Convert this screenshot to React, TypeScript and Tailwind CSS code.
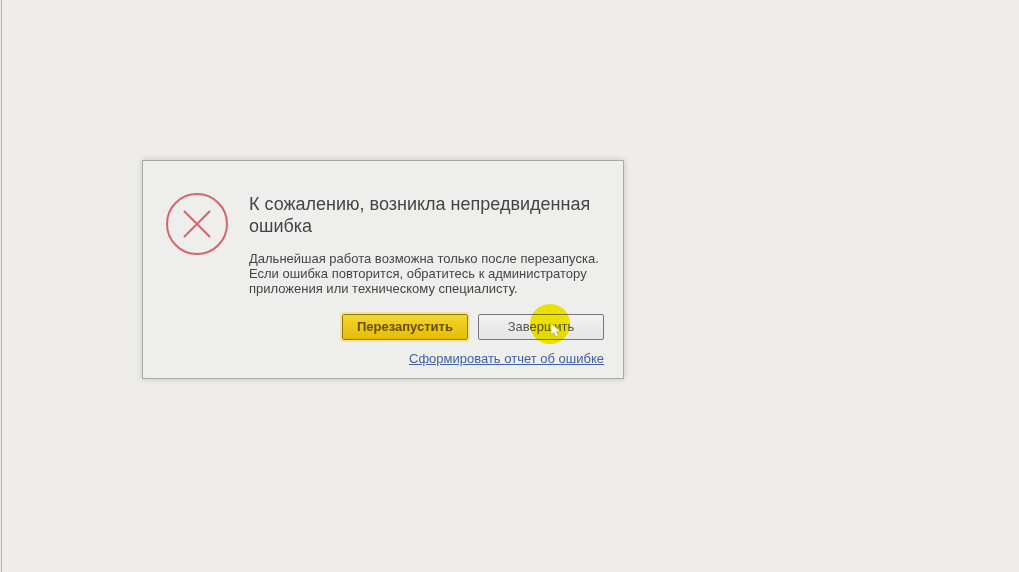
function ErrorIcon() {
  return (
    <svg className="size-16 shrink-0" viewBox="0 0 64 64" fill="none" stroke="#d9636a" strokeWidth="2" aria-hidden="true">
      <circle cx="32" cy="31" r="30" />
      <path d="M19.5 18.5 44.5 43.5M44.5 18.5 19.5 43.5" strokeLinecap="round" />
    </svg>
  );
}

function Pointer() {
  return (
    <span className="pointer-events-none absolute -top-2.5 left-13 size-10" aria-hidden="true">
      <span className="absolute inset-0 rounded-full bg-[#fcf000] mix-blend-multiply" />
      <svg className="absolute left-5 top-4.5 h-4 w-3" viewBox="0 0 12 16">
        <path
          d="M1 1v12l2.8-2.4 2 4.4 2.6-1.2-2-4.2H10.4z"
          fill="#fffbe8"
          stroke="#b5a83c"
          strokeWidth="0.6"
          strokeLinejoin="round"
        />
      </svg>
    </span>
  );
}

export default function App() {
  return (
    <main className="min-h-screen bg-[#eeedeb] pl-px font-['Liberation_Sans',Arial,sans-serif] text-[#454545]">
      <div className="min-h-screen border-l border-[#b3b2ac] px-35 py-40">
        <section
          role="alertdialog"
          aria-labelledby="error-title"
          aria-describedby="error-text"
          className="flex w-full max-w-[482px] gap-5 border border-[#a9a9a9] bg-[#eeeeed] pt-8 pr-[19px] pb-[11px] pl-[22px] shadow-[0_0_6px_rgba(0,0,0,0.18)]"
        >
          <ErrorIcon />
          <div className="min-w-0 flex-1">
            <h1 id="error-title" className="text-[18px] leading-[22px]">
              К сожалению, возникла непредвиденная ошибка
            </h1>
            <p id="error-text" className="mt-3.5 text-[13px] leading-[15px]">
              Дальнейшая работа возможна только после перезапуска. Если ошибка повторится, обратитесь к администратору
              приложения или техническому специалисту.
            </p>
            <div className="mt-[18px] flex justify-end gap-2.5">
              <button
                type="button"
                className="h-[26px] w-[126px] rounded-xs border border-[#92770f] bg-linear-to-b from-[#f3d52c] to-[#e6bd00] text-[13px] font-bold text-[#655000] outline-2 outline-[#f1e2a0]"
              >
                Перезапустить
              </button>
              <div className="relative">
                <button
                  type="button"
                  className="h-[26px] w-[126px] rounded-xs border border-[#777777] bg-linear-to-b from-[#f2f2f2] to-[#e5e5e5] text-[13px] text-[#555555]"
                >
                  Завершить
                </button>
                <Pointer />
              </div>
            </div>
            <div className="mt-[11px] text-right text-[13px] leading-4">
              <a href="#report" className="text-[#3c62ac] underline">
                Сформировать отчет об ошибке
              </a>
            </div>
          </div>
        </section>
      </div>
    </main>
  );
}
